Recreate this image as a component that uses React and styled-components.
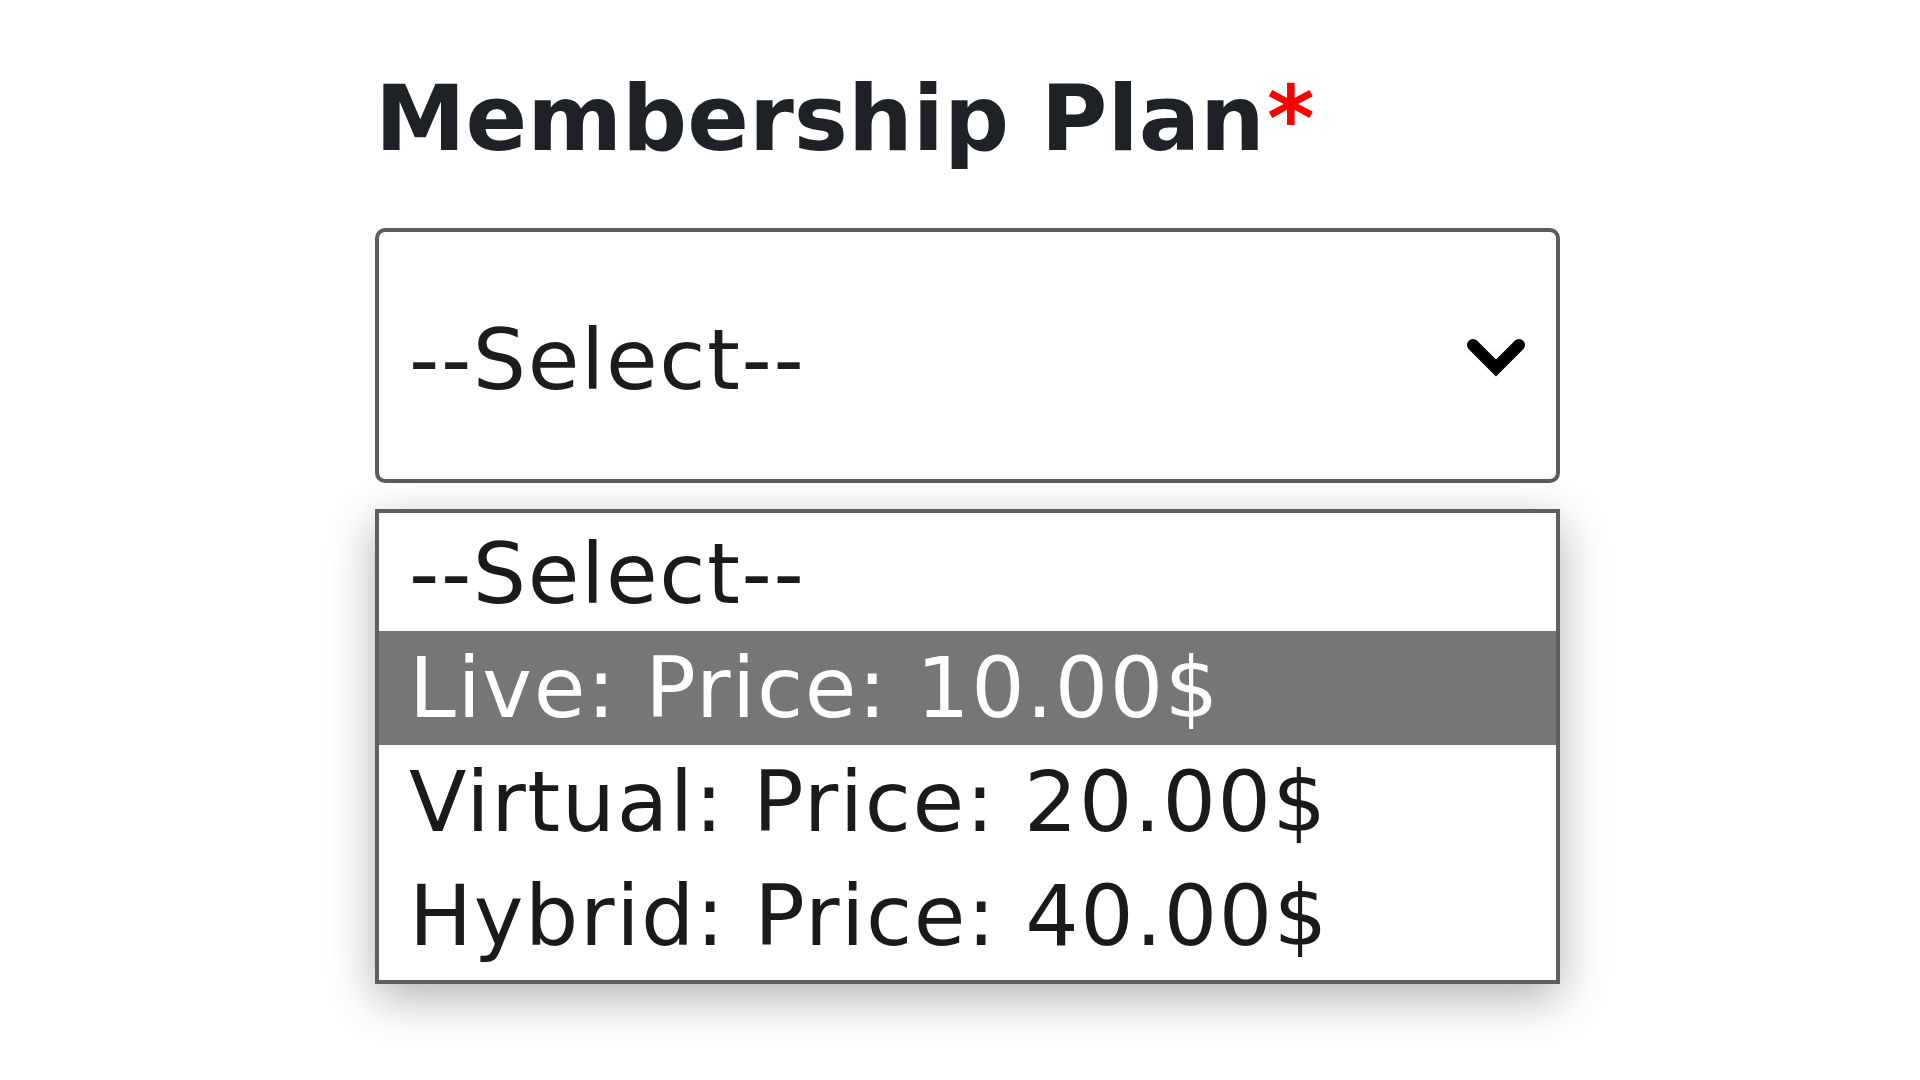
import React from "react";
import styled, { createGlobalStyle } from "styled-components";

const Global = createGlobalStyle`
  html, body { margin: 0; padding: 0; background: #ffffff; }
  body { width: 1920px; height: 1080px; overflow: hidden; }
`;

const Page = styled.div`
  padding: 65px 0 0 375px;
  font-family: "DejaVu Sans", Verdana, sans-serif;
`;

const Field = styled.div`
  width: 1185px;
  display: flex;
  flex-direction: column;
`;

const Label = styled.div`
  font-family: "DejaVu Sans", Verdana, sans-serif;
  font-weight: 700;
  font-size: 91px;
  line-height: 107px;
  color: #1e2227;
  margin: 0 0 56px 0;
`;

const Required = styled.span`
  color: #ff0000;
  margin-left: 2px;
`;

const SelectBox = styled.div`
  box-sizing: border-box;
  height: 255px;
  border: 4px solid #5c5c5c;
  border-radius: 10px;
  background: #fff;
  display: flex;
  align-items: center;
  justify-content: space-between;
  padding: 8px 29px 0 30px;
  font-size: 84px;
  letter-spacing: 1.6px;
  color: #1c1c1c;
`;

const Chevron = styled.svg`
  width: 62px;
  height: 40px;
  flex: none;
  margin-top: -6px;
`;

const List = styled.div`
  box-sizing: border-box;
  margin-top: 26px;
  border: 4px solid #5f5f5f;
  background: #fff;
  padding: 4px 0 7px 0;
  box-shadow: 0 14px 44px rgba(0, 0, 0, 0.3);
`;

const Option = styled.div`
  height: 114px;
  line-height: 114px;
  font-size: 84px;
  letter-spacing: 1.6px;
  padding-left: 30px;
  white-space: nowrap;
  color: ${(p) => (p.$active ? "#ffffff" : "#1a1a1a")};
  background: ${(p) => (p.$active ? "#767676" : "#ffffff")};
`;

const options = [
  "--Select--",
  "Live: Price: 10.00$",
  "Virtual: Price: 20.00$",
  "Hybrid: Price: 40.00$",
];

export default function App() {
  return (
    <>
      <Global />
      <Page>
        <Field>
          <Label>
            Membership Plan<Required>*</Required>
          </Label>
          <SelectBox role="combobox" aria-expanded="true">
            <span>--Select--</span>
            <Chevron viewBox="0 0 62 40" aria-hidden="true">
              <polyline
                points="8,8 31,31 54,8"
                fill="none"
                stroke="#000"
                strokeWidth="12"
                strokeLinecap="round"
                strokeLinejoin="miter"
              />
            </Chevron>
          </SelectBox>
          <List role="listbox">
            {options.map((o, i) => (
              <Option key={o} role="option" $active={i === 1}>
                {o}
              </Option>
            ))}
          </List>
        </Field>
      </Page>
    </>
  );
}
